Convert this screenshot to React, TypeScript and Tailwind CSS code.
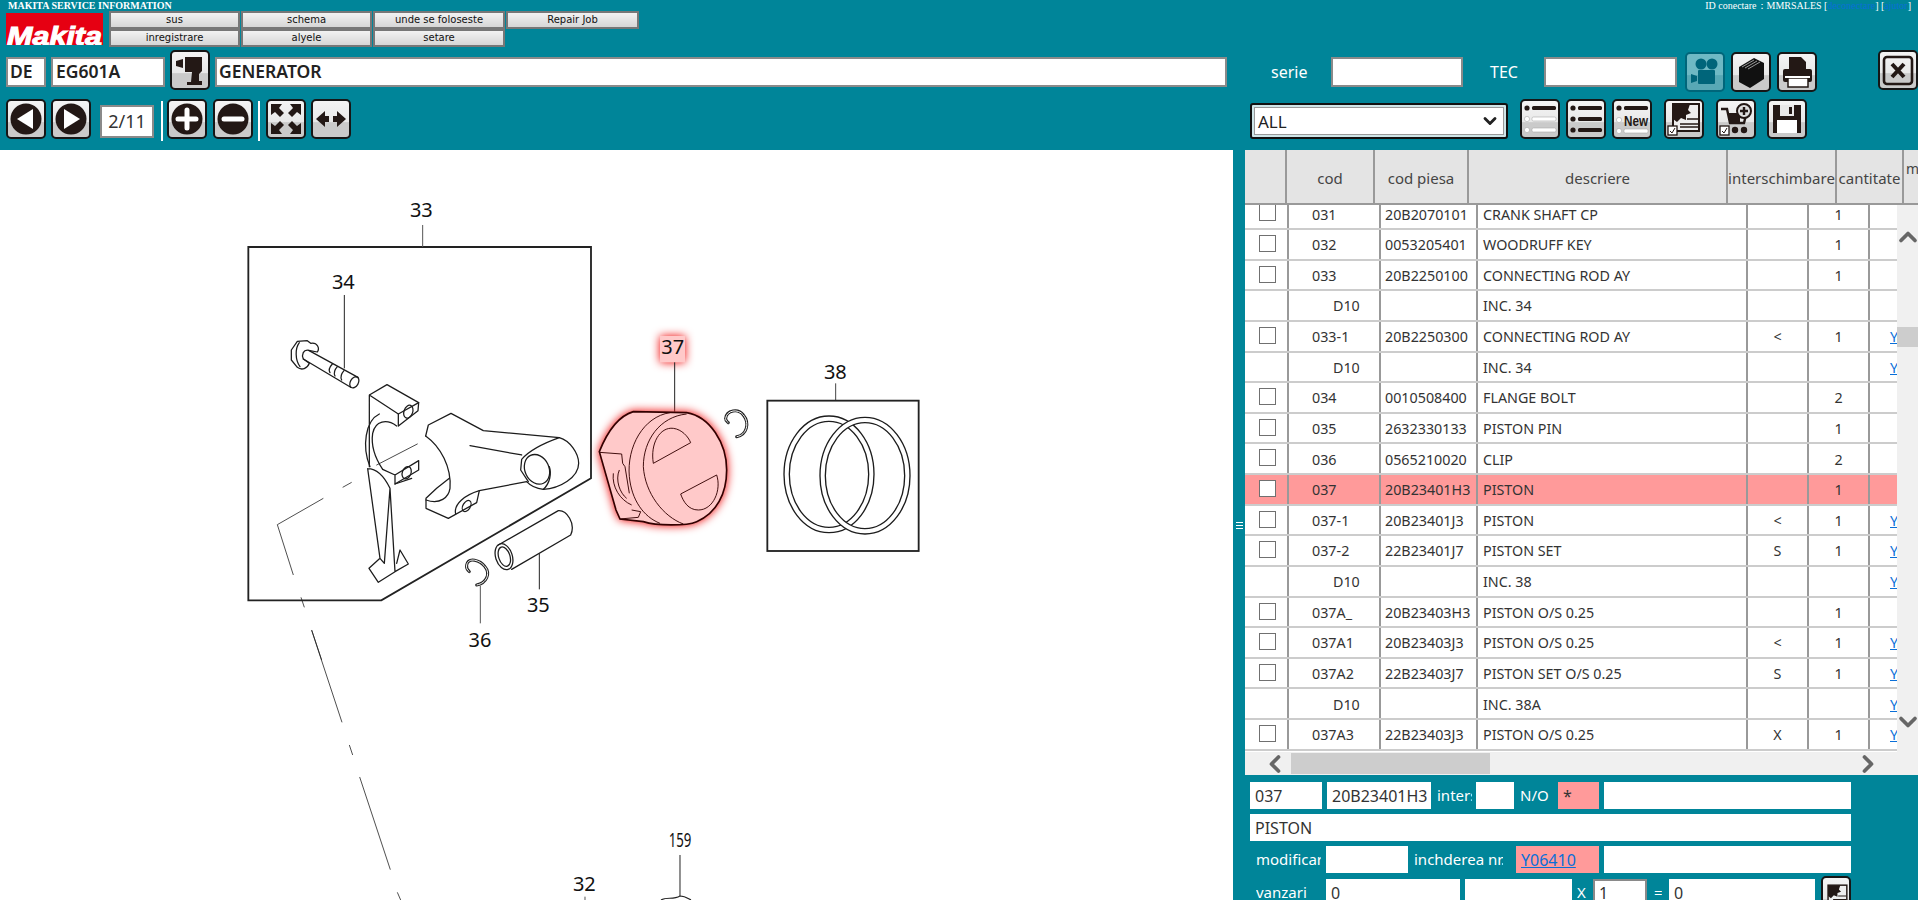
import React from 'react';
import { ChevronDown, ChevronLeft, ChevronRight, ChevronUp } from 'lucide-react';

const INK = '#231815';

type Row = { code: string; part?: string; desc: string; sw?: string; qty?: string; link?: boolean; sub?: boolean; active?: boolean };

const rows: Row[] = [
  { code: '031', part: '20B2070101', desc: 'CRANK SHAFT CP', qty: '1' },
  { code: '032', part: '0053205401', desc: 'WOODRUFF KEY', qty: '1' },
  { code: '033', part: '20B2250100', desc: 'CONNECTING ROD AY', qty: '1' },
  { code: 'D10', desc: 'INC. 34', sub: true },
  { code: '033-1', part: '20B2250300', desc: 'CONNECTING ROD AY', sw: '<', qty: '1', link: true },
  { code: 'D10', desc: 'INC. 34', sub: true, link: true },
  { code: '034', part: '0010508400', desc: 'FLANGE BOLT', qty: '2' },
  { code: '035', part: '2632330133', desc: 'PISTON PIN', qty: '1' },
  { code: '036', part: '0565210020', desc: 'CLIP', qty: '2' },
  { code: '037', part: '20B23401H3', desc: 'PISTON', qty: '1', active: true },
  { code: '037-1', part: '20B23401J3', desc: 'PISTON', sw: '<', qty: '1', link: true },
  { code: '037-2', part: '22B23401J7', desc: 'PISTON SET', sw: 'S', qty: '1', link: true },
  { code: 'D10', desc: 'INC. 38', sub: true, link: true },
  { code: '037A_', part: '20B23403H3', desc: 'PISTON O/S 0.25', qty: '1' },
  { code: '037A1', part: '20B23403J3', desc: 'PISTON O/S 0.25', sw: '<', qty: '1', link: true },
  { code: '037A2', part: '22B23403J7', desc: 'PISTON SET O/S 0.25', sw: 'S', qty: '1', link: true },
  { code: 'D10', desc: 'INC. 38A', sub: true, link: true },
  { code: '037A3', part: '22B23403J3', desc: 'PISTON O/S 0.25', sw: 'X', qty: '1', link: true },
];

function IconBtn({ children, active, small }: { children: React.ReactNode; active?: boolean; small?: boolean }) {
  return (
    <button
      className={`${small ? 'w-[30px] h-[40px]' : 'w-[40px] h-[40px]'} shrink-0 rounded-[5px] border-2 overflow-hidden ${
        active
          ? 'border-[#00667a] bg-[linear-gradient(#6fb9c4_0%,#6fb9c4_58%,#58a8b5_60%,#58a8b5_100%)]'
          : 'border-[#161616] bg-[linear-gradient(#f4f4f4_0%,#e8e8e8_58%,#cacaca_60%,#cacaca_100%)]'
      }`}
    >
      <svg viewBox="0 0 36 36" className="w-full h-full">
        {children}
      </svg>
    </button>
  );
}

function ListIcon({ mode }: { mode: 'one' | 'all' | 'new' }) {
  const bar = (y: number, on: boolean) => (
    <g key={y}>
      <circle cx="5" cy={y} r="2.6" fill={on ? INK : '#fff'} stroke={on ? 'none' : '#aaa'} strokeWidth="0.6" />
      <rect x="10" y={y - 2} width="24" height="4" rx="1.5" fill={on ? INK : '#fff'} stroke={on ? 'none' : '#aaa'} strokeWidth="0.6" />
    </g>
  );
  if (mode === 'new') {
    return (
      <>
        {bar(7, true)}
        <circle cx="5" cy="19" r="2.6" fill="#fff" stroke="#aaa" strokeWidth="0.6" />
        <text x="10" y="25" fontSize="15" fontWeight="700" fill={INK} textLength="24" lengthAdjust="spacingAndGlyphs" fontFamily="'Liberation Sans', sans-serif">New</text>
        {bar(30, false)}
      </>
    );
  }
  return (
    <>
      {bar(7, true)}
      {bar(18, mode === 'all')}
      {bar(29, mode === 'all')}
    </>
  );
}

function CheckMark() {
  return (
    <g>
      <rect x="2" y="25" width="9" height="9" fill="#fff" stroke={INK} strokeWidth="1.3" />
      <path d="M4 30 L6 32 L9 27" fill="none" stroke={INK} strokeWidth="1" />
    </g>
  );
}

function SunDoc() {
  return (
    <>
      <rect x="7" y="3" width="26" height="27" fill="#eee" stroke={INK} strokeWidth="2" />
      <path d="M7 3 H24 L22 9 L25 12 L20 14 L20 19 L15 17 L11 21 L7 18 Z" fill={INK} />
      <path d="M21 18 H32 M14 23 H32 M14 26 H32" stroke={INK} strokeWidth="1.6" />
      <CheckMark />
    </>
  );
}

function Parts() {
  const line = { fill: 'none', stroke: '#1c1c1c', strokeWidth: 3.8, strokeLinejoin: 'round', strokeLinecap: 'round' } as const;
  const label = { fontFamily: "'Noto Sans', sans-serif", fontSize: 60, textAnchor: 'middle', fill: '#111' } as const;
  const clipA = 'M770 1215 C800 1210 812 1180 795 1160 C780 1140 745 1130 740 1155 C738 1165 742 1170 748 1175';
  const clipB = 'M500 350 C530 345 540 310 520 285 C505 265 470 270 467 295 C466 302 472 305 475 308';
  return (
    <svg viewBox="0 150 1233 750" className="block w-[1233px] h-[750px]">
      {/* connecting rod box */}
      <g transform="translate(220 180) scale(0.33333)">
        <path d="M85 201 H1113 V895 L484 1261 H85 Z" fill="none" stroke="#222" strokeWidth="5.5" />
        <path d="M608 135 V201" stroke="#555" strokeWidth="3" />
        <text x="604" y="110" {...label}>33</text>
        <text x="370" y="327" {...label}>34</text>
        <path d="M373 345 V565" stroke="#222" strokeWidth="3" />
        {/* bolt */}
        <g {...line}>
          <path d="M214 510 L232 484 L262 482 L272 490 C292 486 300 505 292 516 L266 511 C250 508 244 524 250 537 L268 550 C262 566 245 572 232 562 L214 540 Z" />
          <path d="M238 488 C225 505 225 540 240 560" />
          <path d="M266 511 L414 592 M250 537 L392 622" />
          <ellipse cx="403" cy="607" rx="12" ry="18" transform="rotate(30 403 607)" />
          <path d="M337 552 C328 562 326 572 330 578 M352 560 C343 570 341 580 345 588 M372 572 C363 582 361 592 365 600" />
        </g>
        {/* big end cap */}
        <g {...line}>
          <path d="M448 645 L501 614 L596 668 L594 692 L535 738 V702 L448 645 V860" />
          <path d="M535 702 L596 668" />
          <ellipse cx="565" cy="695" rx="13" ry="20" transform="rotate(20 565 695)" />
          <path d="M478 702 C436 722 425 800 450 860 M530 738 C500 716 466 722 458 760 C452 800 468 838 488 868" />
          <path d="M470 855 L592 792" strokeWidth="2.4" />
          <path d="M488 868 L525 885 L596 842 V870 L525 912 V885" />
          <ellipse cx="560" cy="878" rx="13" ry="19" transform="rotate(20 560 878)" />
          <path d="M525 912 L575 895" />
          <path d="M443 866 C470 866 492 888 510 925 L525 1175 L565 1152 L540 1110 L530 1150 M443 866 L480 1135 L447 1165 L475 1207 L525 1175 M480 1135 L493 1150 L510 925" />
        </g>
        {/* rod */}
        <g {...line}>
          <path d="M617 768 L625 735 L693 700 L790 752 L1018 773 C1050 782 1076 820 1076 850 C1076 892 1020 926 970 928 C950 926 930 916 920 905 L778 932 L770 968 L685 1015 L618 985 V955 L650 925 L688 895" />
          <path d="M617 768 C662 800 695 862 690 925 C686 952 660 975 618 960" />
          <path d="M750 797 L905 825" />
          <path d="M707 1002 C700 972 735 945 778 932" />
          <ellipse cx="740" cy="978" rx="11" ry="18" transform="rotate(30 740 978)" />
          <path d="M1018 773 C970 790 925 815 905 838 L902 870 L925 905" />
          <ellipse cx="951" cy="868" rx="36" ry="46" transform="rotate(-25 951 868)" />
          <path d="M988 860 C995 880 990 910 970 928" />
        </g>
        {/* pin */}
        <g {...line}>
          <ellipse cx="852" cy="1130" rx="25" ry="40" transform="rotate(-18 852 1130)" />
          <ellipse cx="853" cy="1130" rx="17" ry="30" transform="rotate(-18 853 1130)" />
          <path d="M835 1095 L1015 992 C1040 990 1068 1030 1052 1065 L875 1168" />
        </g>
        <path d="M958 1120 V1228" stroke="#222" strokeWidth="3" />
        <text x="955" y="1296" {...label}>35</text>
        {/* clip */}
        <path d={clipA} fill="none" stroke="#222" strokeWidth="9" strokeLinecap="round" />
        <path d={clipA} fill="none" stroke="#fff" strokeWidth="3" />
        <path d="M781 1218 V1330" stroke="#555" strokeWidth="3" />
        <text x="780" y="1400" {...label}>36</text>
        {/* center line */}
        <path d="M395 907 L368 922 M310 955 L172 1034 L220 1185 M243 1252 L253 1282 M275 1350 L305 1440" fill="none" stroke="#222" strokeWidth="2.4" />
      </g>

      {/* piston and rings */}
      <g transform="translate(570 320) scale(0.33333)">
        <path d="M797 190 V242" stroke="#444" strokeWidth="3" />
        <text x="796" y="177" {...label}>38</text>
        <rect x="592" y="242" width="454" height="451" fill="none" stroke="#222" strokeWidth="5.5" />
        <ellipse cx="777" cy="463" rx="127" ry="167" fill="none" stroke="#1c1c1c" strokeWidth="20" />
        <ellipse cx="777" cy="463" rx="127" ry="167" fill="none" stroke="#fff" strokeWidth="12" />
        <ellipse cx="885" cy="467" rx="127" ry="167" fill="none" stroke="#1c1c1c" strokeWidth="20" />
        <ellipse cx="885" cy="467" rx="127" ry="167" fill="none" stroke="#fff" strokeWidth="12" />

        <rect x="270" y="48" width="75" height="79" fill="#ffc9c9" className="drop-shadow-[0_0_14px_#f00000]" />
        <text x="308" y="103" {...label}>37</text>
        <path d="M314 127 V275" stroke="#222" strokeWidth="3" />
        <path
          d="M88 395 C110 340 140 290 190 275 L350 278 C420 290 470 370 470 450 C470 520 440 580 380 605 C350 618 260 618 220 605 L150 597 L138 570 Z"
          fill="#ffc9c9"
          stroke="#300"
          strokeWidth="5"
          className="drop-shadow-[0_0_14px_#f00000]"
        />
        <g fill="none" stroke="#300" strokeWidth="2.8" strokeLinejoin="round">
          <path d="M300 278 C220 290 170 380 178 470 C185 540 220 590 270 610" />
          <path d="M350 282 C270 290 220 360 220 440 C225 520 280 590 340 612" />
          <path d="M250 430 C240 370 270 320 310 325 C335 328 355 350 362 368 Z" />
          <path d="M332 522 L440 465 C455 510 430 570 385 570 C355 570 340 545 332 522 Z" />
          <path d="M88 397 L155 402 L158 430 L165 440 L178 520" />
          <path d="M130 460 C125 500 150 540 185 555 M148 450 C135 480 150 520 170 535" />
          <path d="M185 570 L212 575 L205 592 L150 597" />
        </g>
        <path d={clipB} fill="none" stroke="#222" strokeWidth="9" strokeLinecap="round" />
        <path d={clipB} fill="none" stroke="#fff" strokeWidth="3" />
      </g>

      {/* lower part of the exploded view */}
      <g transform="translate(280 600) scale(0.33333)">
        <path d="M95 91 L186 367 M208 435 L218 465 M239 531 L331 809 M352 877 L362 900" fill="none" stroke="#222" strokeWidth="2.4" />
        <text x="1200" y="742" {...label} textLength="68" lengthAdjust="spacingAndGlyphs">159</text>
        <path d="M1200 765 V888" stroke="#222" strokeWidth="3" />
        <path d="M1143 900 C1160 890 1180 900 1200 888 C1215 888 1225 896 1233 900" fill="none" stroke="#222" strokeWidth="3.4" />
        <text x="913" y="872" {...label}>32</text>
        <path d="M915 890 V900" stroke="#555" strokeWidth="3" />
      </g>
    </svg>
  );
}

function TableRow({ row }: { row: Row }) {
  const cell = 'h-full flex items-center pt-[1px] border-r-2 border-[#999] text-[14.3px] overflow-hidden whitespace-nowrap';
  return (
    <div
      className={`grid grid-cols-[44px_92px_97px_270px_61px_61px_27px] h-[30.63px] shrink-0 border-b-2 border-[#ccc] text-[#333] ${
        row.active ? 'bg-[#ff9a9a]' : 'bg-white'
      }`}
    >
      <div className="h-full border-r-2 border-[#999] pl-[14px] pt-[5px]">
        {!row.sub && <div className="w-[17px] h-[17px] border border-[#707070] bg-white" />}
      </div>
      <div className={`${cell} ${row.sub ? 'pl-[44px]' : 'pl-[23px]'}`}>{row.code}</div>
      <div className={`${cell} pl-[4px]`}>{row.part}</div>
      <div className={`${cell} pl-[5px]`}>{row.desc}</div>
      <div className={`${cell} justify-center`}>{row.sw}</div>
      <div className={`${cell} justify-center`}>{row.qty}</div>
      <div className="h-full flex items-center pt-[1px] pl-[20px] text-[14.3px] text-[#0a6fd8] underline overflow-hidden">{row.link ? 'Y06410' : ''}</div>
    </div>
  );
}

const inputBox = 'shrink-0 h-[27px] bg-white flex items-center px-[5px] text-[16px] text-[#333] overflow-hidden whitespace-nowrap';
const formLabel = 'shrink-0 text-[15px] text-white overflow-hidden whitespace-nowrap';
const headInput = 'shrink-0 h-[30px] bg-white border-2 border-[#8a8a8a] flex items-center';

export default function App() {
  return (
    <div className="w-[1918px] h-[900px] overflow-hidden bg-[#008599] font-['Noto_Sans',sans-serif]">
      {/* Header */}
      <div className="h-[150px] flex flex-col">
        <div className="h-[11px] flex justify-between items-center pl-[8px] pr-[7px] font-['Liberation_Serif',serif] text-[10px] text-white leading-none">
          <span className="font-bold">MAKITA SERVICE INFORMATION</span>
          <span>
            ID conectare：MMRSALES [<span className="text-[#0a6fd8]">deconectare</span>] [<span className="text-[#0a6fd8]">ajutor</span>]
          </span>
        </div>

        <div className="h-[36px] flex">
          <div className="ml-[6px] mt-[2px] w-[97px] h-[32px]">
            <svg viewBox="0 0 97 32" className="block w-full h-full">
              <rect width="97" height="32" fill="#e60012" />
              <text x="1" y="32" fontSize="26" fontWeight="700" fontStyle="italic" fill="#fff" stroke="#fff" strokeWidth="1" textLength="95" lengthAdjust="spacingAndGlyphs" fontFamily="'Liberation Sans', sans-serif">
                Makita
              </text>
            </svg>
          </div>
          <div className="ml-[6px] grid grid-cols-[131px_131px_132px_133px] grid-rows-[18px_18px] gap-x-[1px] font-['DejaVu_Sans',sans-serif] text-[10px] text-[#111]">
            {['sus', 'schema', 'unde se foloseste', 'Repair Job', 'inregistrare', 'alyele', 'setare'].map((t) => (
              <button key={t} className="border-2 border-[#777] bg-[linear-gradient(#f2f2f2,#d6d6d6)] leading-none">
                {t}
              </button>
            ))}
          </div>
        </div>

        <div className="mt-[4px] h-[41px] flex items-center">
          <div className={`${headInput} ml-[6px] w-[40px] pl-[2px] text-[17.5px] font-semibold text-[#222]`}>DE</div>
          <div className={`${headInput} ml-[5px] w-[114px] pl-[3px] text-[17.5px] font-semibold text-[#222]`}>EG601A</div>
          <div className="ml-[5px]">
            <IconBtn>
              <path d="M4 9 L11 7 V16 L4 14 Z" fill={INK} />
              <path d="M13 5 H30 V19 L27 22 V29 H30 V33 H15 V30 H19 L20 20 H13 Z" fill={INK} />
            </IconBtn>
          </div>
          <div className={`${headInput} ml-[5px] w-[1012px] pl-[2px] text-[17.5px] font-semibold text-[#222]`}>GENERATOR</div>
          <span className="ml-[44px] w-[36px] text-[16px] text-white">serie</span>
          <div className={`${headInput} ml-[24px] w-[132px]`} />
          <span className="ml-[27px] w-[28px] text-[16px] text-white">TEC</span>
          <div className={`${headInput} ml-[26px] w-[133px]`} />
          <div className="ml-[8px] flex gap-[6px]">
            <IconBtn active>
              <circle cx="14" cy="10" r="5.5" fill="#00657a" />
              <circle cx="25" cy="10" r="5.5" fill="#00657a" />
              <rect x="11" y="16" width="17" height="14" rx="1" fill="#00657a" />
              <path d="M4 20 L10 22 V27 L4 29 Z" fill="#00657a" />
            </IconBtn>
            <IconBtn>
              <path d="M6 13 L21 4 L31 9 V25 L17 34 L6 28 Z" fill="#111" />
              <path d="M9 13 L21 6 M12 14 L24 7 M15 15 L27 8" stroke="#999" strokeWidth="1" />
            </IconBtn>
            <IconBtn>
              <path d="M10 3 H22 L27 8 V16 H10 Z" fill={INK} />
              <rect x="4" y="15" width="29" height="13" rx="2" fill={INK} />
              <rect x="9" y="24" width="20" height="9" fill="#fff" stroke={INK} strokeWidth="1.5" />
              <rect x="6" y="22" width="25" height="2" fill="#fff" />
            </IconBtn>
          </div>
          <div className="ml-[61px]">
            <IconBtn>
              <rect x="4" y="5" width="28" height="27" rx="3" fill="none" stroke={INK} strokeWidth="2.6" />
              <path d="M12 12 L24 25 M24 12 L12 25" stroke={INK} strokeWidth="4" />
            </IconBtn>
          </div>
        </div>

        <div className="mt-[9px] h-[40px] flex justify-between">
          <div className="flex items-center">
            <div className="ml-[6px]">
              <IconBtn>
                <circle cx="18" cy="18" r="15.5" fill={INK} />
                <path d="M25 8 V28 L9 18 Z" fill="#fff" />
              </IconBtn>
            </div>
            <div className="ml-[5px]">
              <IconBtn>
                <circle cx="18" cy="18" r="15.5" fill={INK} />
                <path d="M11 8 V28 L27 18 Z" fill="#fff" />
              </IconBtn>
            </div>
            <div className="ml-[9px] w-[54px] h-[33px] bg-white border-2 border-[#8a8a8a] flex items-center justify-center text-[18px] text-[#333]">2/11</div>
            <div className="ml-[7px] w-[2px] h-[40px] bg-white" />
            <div className="ml-[4px]">
              <IconBtn>
                <circle cx="18" cy="18" r="15.5" fill={INK} />
                <path d="M18 9 V27 M9 18 H27" stroke="#fff" strokeWidth="5" strokeLinecap="round" />
              </IconBtn>
            </div>
            <div className="ml-[6px]">
              <IconBtn>
                <circle cx="18" cy="18" r="15.5" fill={INK} />
                <path d="M9 18 H27" stroke="#fff" strokeWidth="5" strokeLinecap="round" />
              </IconBtn>
            </div>
            <div className="ml-[5px] w-[2px] h-[40px] bg-white" />
            <div className="ml-[6px]">
              <IconBtn>
                {['', 'translate(36 0) scale(-1 1)', 'translate(0 36) scale(1 -1)', 'translate(36 36) scale(-1 -1)'].map((tr) => (
                  <path key={tr} d="M3 3 H14 L11 7 L16 12 L12 16 L7 11 L3 14 Z" fill={INK} transform={tr} />
                ))}
              </IconBtn>
            </div>
            <div className="ml-[5px]">
              <IconBtn>
                <path d="M3 18 L12 10 V15 H16 V21 H12 V26 Z M33 18 L24 10 V15 H20 V21 H24 V26 Z" fill={INK} />
              </IconBtn>
            </div>
          </div>

          <div className="w-[668px] flex items-center">
            <div className="w-[258px] h-[36px] rounded-[3px] border-2 border-[#111] bg-[#cfe5e8] p-[2px]">
              <div className="w-full h-full bg-white border border-[#999] flex items-center justify-between pl-[3px] pr-[3px] text-[17px] text-[#222]">
                <span className="pt-[1px]">ALL</span>
                <ChevronDown size={20} strokeWidth={3.4} className="text-[#222]" />
              </div>
            </div>
            <div className="ml-[12px]"><IconBtn><ListIcon mode="one" /></IconBtn></div>
            <div className="ml-[6px]"><IconBtn><ListIcon mode="all" /></IconBtn></div>
            <div className="ml-[6px]"><IconBtn><ListIcon mode="new" /></IconBtn></div>
            <div className="ml-[12px]"><IconBtn><SunDoc /></IconBtn></div>
            <div className="ml-[12px]">
              <IconBtn>
                <path d="M3 8 H9 L12 22 H26 L28 14" fill="none" stroke={INK} strokeWidth="2.4" />
                <path d="M10 12 H22 V21 H12 Z" fill={INK} />
                <circle cx="26" cy="10" r="7" fill="#ddd" stroke={INK} strokeWidth="2" />
                <path d="M26 6 V14 M22 10 H30" stroke={INK} strokeWidth="2.4" />
                <circle cx="17" cy="29" r="3.2" fill={INK} />
                <circle cx="26" cy="29" r="3.2" fill={INK} />
                <CheckMark />
              </IconBtn>
            </div>
            <div className="ml-[11px]">
              <IconBtn>
                <path d="M4 4 H32 V32 H4 Z" fill={INK} />
                <rect x="11" y="4" width="14" height="11" fill="#e8e8e8" />
                <rect x="20" y="6" width="3" height="7" fill={INK} />
                <rect x="8" y="19" width="20" height="13" fill="#fff" />
              </IconBtn>
            </div>
          </div>
        </div>
      </div>

      {/* Body */}
      <div className="h-[750px] flex">
        <div className="w-[1233px] h-full bg-white overflow-hidden">
          <Parts />
        </div>
        <div className="w-[12px] h-full flex items-center justify-center">
          <div className="flex flex-col gap-[2px] mb-[-1px]">
            <div className="w-[7px] h-[1px] bg-white" />
            <div className="w-[7px] h-[1px] bg-white" />
            <div className="w-[7px] h-[1px] bg-white" />
          </div>
        </div>

        <div className="w-[673px] h-full flex flex-col">
          <div className="h-[55px] shrink-0 grid grid-cols-[42px_88px_94px_259px_109px_67px_14px] bg-[#e4e4e4] border-b-2 border-[#999] text-[15px] text-[#444]">
            {['', 'cod', 'cod piesa', 'descriere', 'interschimbare', 'cantitate'].map((h) => (
              <div key={h || 'check'} className="h-full pt-[3px] flex items-center justify-center border-r-2 border-[#999] whitespace-nowrap overflow-hidden">
                {h}
              </div>
            ))}
            <div className="h-full pl-[2px] pt-[8px] text-[14px] overflow-hidden">modificar</div>
          </div>

          <div className="h-[547px] shrink-0 flex">
            <div className="w-[652px] bg-white overflow-hidden">
              <div className="-mt-[5.6px] flex flex-col">
                {rows.map((r, i) => (
                  <TableRow key={i} row={r} />
                ))}
              </div>
            </div>
            <div className="w-[21px] bg-[#f0f0f0] flex flex-col items-center">
              <ChevronUp size={28} strokeWidth={3.2} className="shrink-0 mt-[18px] text-[#666]" />
              <div className="mt-[76px] w-full h-[20px] shrink-0 bg-[#cdcdcd]" />
              <ChevronDown size={28} strokeWidth={3.2} className="shrink-0 mt-[361px] text-[#666]" />
            </div>
          </div>

          <div className="h-[23px] shrink-0 bg-[#f0f0f0] flex items-center">
            <ChevronLeft size={28} strokeWidth={3.2} className="shrink-0 ml-[16px] text-[#666]" />
            <div className="ml-[2px] w-[199px] h-[21px] shrink-0 bg-[#cdcdcd]" />
            <ChevronRight size={28} strokeWidth={3.2} className="shrink-0 ml-[364px] text-[#666]" />
          </div>

          {/* Detail form */}
          <div className="pl-[5px] pt-[7px] flex flex-col">
            <div className="flex items-center">
              <div className={`${inputBox} w-[72px]`}>037</div>
              <div className={`${inputBox} ml-[5px] w-[104px]`}>20B23401H3</div>
              <span className={`${formLabel} ml-[6px] w-[35px]`}>interschimbare</span>
              <div className={`${inputBox} ml-[4px] w-[38px]`} />
              <span className={`${formLabel} ml-[6px] w-[29px]`}>N/O</span>
              <div className={`${inputBox} ml-[9px] w-[41px] !bg-[#ff9a9a]`}>*</div>
              <div className={`${inputBox} ml-[5px] w-[247px]`} />
            </div>
            <div className={`${inputBox} mt-[5px] w-[601px]`}>PISTON</div>
            <div className="mt-[5px] flex items-center">
              <span className={`${formLabel} ml-[6px] w-[65px]`}>modificar</span>
              <div className={`${inputBox} ml-[5px] w-[82px]`} />
              <span className={`${formLabel} ml-[6px] w-[89px]`}>inchderea nr.</span>
              <div className={`${inputBox} ml-[13px] w-[83px] !bg-[#ff9a9a] !text-[#0a6fd8] underline`}>Y06410</div>
              <div className={`${inputBox} ml-[5px] w-[247px]`} />
            </div>
            <div className="mt-[6px] flex items-start">
              <span className={`${formLabel} ml-[6px] w-[65px] leading-[27px]`}>vanzari</span>
              <div className={`${inputBox} ml-[5px] w-[134px]`}>0</div>
              <div className={`${inputBox} ml-[5px] w-[107px]`} />
              <span className={`${formLabel} ml-[5px] w-[11px] leading-[27px]`}>X</span>
              <div className={`${inputBox} ml-[5px] w-[54px] border-2 border-[#8a8a8a] !px-[4px]`}>1</div>
              <span className={`${formLabel} ml-[7px] w-[8px] leading-[27px]`}>=</span>
              <div className={`${inputBox} ml-[7px] w-[146px]`}>0</div>
              <div className="ml-[6px] -mt-[3px]">
                <IconBtn small><SunDoc /></IconBtn>
              </div>
            </div>
          </div>
        </div>
      </div>
    </div>
  );
}
